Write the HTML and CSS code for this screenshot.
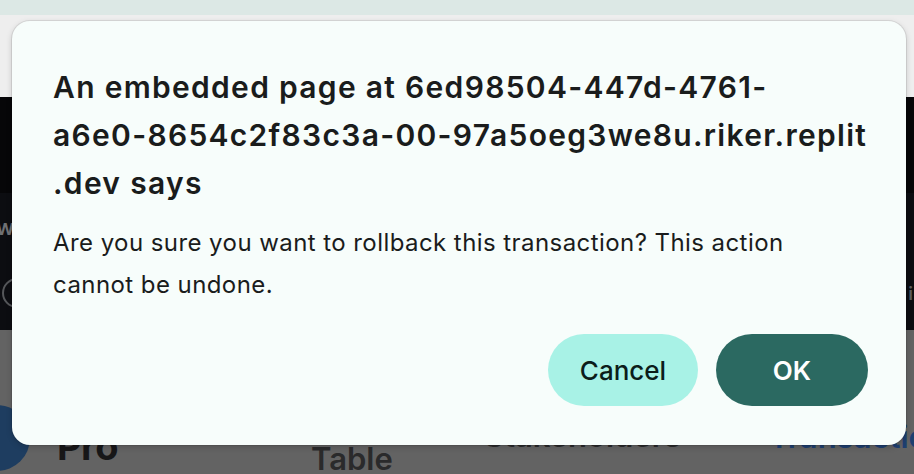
FILE: index.html
```html
<!DOCTYPE html>
<html>
<head>
<meta charset="utf-8">
<link rel="stylesheet" href="styles.css">
</head>
<body>
<div class="page">
  <div class="topbar"></div>
  <div class="lightband"></div>
  <div class="dark1"></div>
  <div class="dark2">
    <div class="dark-row one"><span class="edge-left">w</span></div>
    <div class="dark-row two"><span class="ring"></span><span class="edge-right">i</span></div>
  </div>
  <div class="dim">
    <div class="avatar"></div>
    <div class="head pro">Pro</div>
    <div class="head table">Cap<br>Table</div>
    <div class="head stake">Stakeholders</div>
    <div class="head trans">Transactions</div>
  </div>
</div>

<div class="dialog" role="alertdialog">
  <h1 class="title">An embedded page at 6ed98504-447d-4761-<br>a6e0-8654c2f83c3a-00-97a5oeg3we8u.riker.replit<br>.dev says</h1>
  <p class="message">Are you sure you want to rollback this transaction? This action cannot be undone.</p>
  <div class="actions">
    <button class="btn cancel">Cancel</button>
    <button class="btn ok">OK</button>
  </div>
</div>
</body>
</html>
```

FILE: styles.css
```css
html, body {
  margin: 0;
  padding: 0;
}
body {
  width: 914px;
  height: 474px;
  overflow: hidden;
  position: relative;
  font-family: Inter, "Noto Sans", sans-serif;
}
.page {
  display: flex;
  flex-direction: column;
  height: 474px;
}
.topbar {
  height: 15px;
  background: #dce8e5;
}
.lightband {
  height: 82px;
  background: #eeeeee;
}
.dark1 {
  height: 96px;
  background: #060608;
}
.dark2 {
  height: 137px;
  background: #0c0d11;
  display: flex;
  flex-direction: column;
}
.dark-row {
  display: flex;
  justify-content: space-between;
  align-items: center;
}
.dark-row.one {
  height: 64px;
  padding-top: 2px;
}
.dark-row.two {
  height: 44px;
  padding-top: 12px;
}
.edge-left {
  color: #6f7073;
  font-size: 22px;
  font-weight: 600;
  margin-left: -4px;
}
.ring {
  width: 26px;
  height: 26px;
  border: 2px solid #55575a;
  border-radius: 50%;
  margin-left: 2px;
}
.edge-right {
  color: #5d5e61;
  font-size: 18px;
  font-weight: 600;
  margin-right: 1px;
}
.dim {
  flex: 1;
  background: #636363;
  display: flex;
  align-items: flex-start;
  overflow: hidden;
}
.dim > * {
  flex-shrink: 0;
}
.avatar {
  width: 66px;
  height: 66px;
  margin-top: 75px;
  margin-left: -36px;
  border-radius: 50%;
  background: #1e3d60;
}
.head {
  font-weight: 600;
  color: #2a2a2b;
  font-size: 31px;
  line-height: 40px;
  white-space: nowrap;
}
.pro {
  font-size: 38px;
  line-height: 44px;
  font-weight: 700;
  letter-spacing: -0.5px;
  color: #171718;
  margin-left: 27px;
  margin-top: 94px;
}
.table {
  margin-left: 193px;
  margin-top: 69px;
}
.stake {
  margin-left: 91px;
  margin-top: 86px;
}
.trans {
  color: #1e3f70;
  margin-left: 88px;
  margin-top: 87px;
}

.dialog {
  position: absolute;
  left: 12px;
  top: 21px;
  width: 894px;
  height: 424px;
  box-sizing: border-box;
  background: #f7fdfb;
  border-radius: 18px;
  box-shadow: 0 0 0 1px rgba(0,0,0,0.08), 0 2px 6px rgba(0,0,0,0.18);
  padding: 42px 30px 0 41px;
  display: flex;
  flex-direction: column;
  color: #1a1c1c;
}
.title {
  margin: 0;
  font-size: 30px;
  font-weight: 600;
  line-height: 48px;
  letter-spacing: 1.3px;
  white-space: nowrap;
}
.message {
  margin: 15px 0 0 0;
  font-size: 24px;
  font-weight: 400;
  line-height: 42px;
  letter-spacing: 0.43px;
  max-width: 790px;
}
.actions {
  display: flex;
  justify-content: flex-end;
  gap: 18px;
  margin-top: 28px;
  padding-right: 8px;
}
.btn {
  border: none;
  height: 72px;
  border-radius: 36px;
  font-family: Inter, "Noto Sans", sans-serif;
  font-size: 26px;
  font-weight: 500;
  padding: 0;
}
.cancel {
  width: 150px;
  background: #a8f2e6;
  color: #0b1d1a;
}
.ok {
  width: 152px;
  background: #2b6961;
  color: #ffffff;
  font-weight: 600;
}
```
